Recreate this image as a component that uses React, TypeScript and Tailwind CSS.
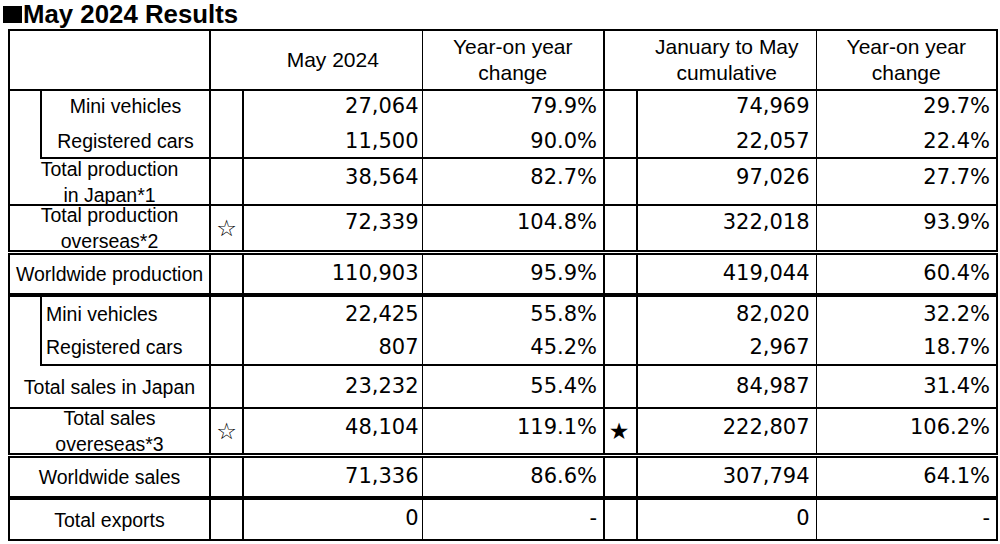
import React from "react"

const lbl = "font-['Liberation_Sans',Arial,sans-serif] text-[19.5px] leading-[22px] text-black"
const num = "font-['DejaVu_Sans',sans-serif] text-[21px] leading-[22px] text-black text-right align-middle"
const star = "font-['DejaVu_Sans',sans-serif] text-[23px] leading-[22px] text-black text-center align-middle"

const B_NONE = "border-b-0"
const B_SOLID = "border-b-2"
const B_DOUBLE = "border-b-[5px] border-double"
const B_THICK = "border-b-4"

function Values({ v, s1 = "", s2 = "", b, pad = "" }: { v: string[]; s1?: string; s2?: string; b: string; pad?: string }) {
  return (
    <>
      <td className={`border-x-2 border-black ${star} ${b}`}>{s1}</td>
      <td className={`border-l-2 border-r border-black pr-[3px] ${num} ${b} ${pad}`}>{v[0]}</td>
      <td className={`border-l border-r-2 border-black pr-[6px] ${num} ${b} ${pad}`}>{v[1]}</td>
      <td className={`border-x-2 border-black pr-[3px] ${star} ${b}`}>{s2}</td>
      <td className={`border-l-2 border-r border-black pr-[6px] ${num} ${b} ${pad}`}>{v[2]}</td>
      <td className={`border-l border-r-2 border-black pr-[6px] ${num} ${b} ${pad}`}>{v[3]}</td>
    </>
  )
}

function TwoLine({ a, c }: { a: string; c: string }) {
  return (
    <div className="h-[42px] flex flex-col justify-center items-center leading-[26px]">
      <span>{a}</span>
      <span>{c}</span>
    </div>
  )
}

export default function App() {
  return (
    <div className="bg-white w-[1000px] h-[544px] overflow-hidden">
      <div className="h-[29px] leading-[28px] font-['Liberation_Sans',Arial,sans-serif] font-bold text-[25.8px] text-black whitespace-nowrap">
        <span className="inline-block w-[19px] h-[17px] bg-black ml-[3px] mr-[1px]"></span>
        May 2024 Results
      </div>

      <table className="ml-[8px] border-collapse table-fixed w-[988px]">
        <colgroup>
          <col className="w-[32px]" />
          <col className="w-[169px]" />
          <col className="w-[33px]" />
          <col className="w-[179px]" />
          <col className="w-[182px]" />
          <col className="w-[33px]" />
          <col className="w-[179px]" />
          <col className="w-[181px]" />
        </colgroup>
        <tbody>
          <tr className="h-[60px]">
            <td colSpan={2} className="border-t-2 border-b-2 border-x-2 border-black"></td>
            <td colSpan={2} className={`border-t-2 border-b-2 border-l-2 border-r border-black text-center pl-[33px] font-['Liberation_Sans',Arial,sans-serif] text-[21px]`}>
              May 2024
            </td>
            <td className="border-t-2 border-b-2 border-l border-r-2 border-black text-center font-['Liberation_Sans',Arial,sans-serif] text-[21px] leading-[26px]">
              Year-on year<br />change
            </td>
            <td colSpan={2} className="border-t-2 border-b-2 border-l-2 border-r border-black text-center pl-[33px] font-['Liberation_Sans',Arial,sans-serif] text-[21px] leading-[26px]">
              January to May<br />cumulative
            </td>
            <td className="border-t-2 border-b-2 border-l border-r-2 border-black text-center font-['Liberation_Sans',Arial,sans-serif] text-[21px] leading-[26px]">
              Year-on year<br />change
            </td>
          </tr>

          {/* production */}
          <tr className="h-[34px]">
            <td rowSpan={2} className="border-x-2 border-black"></td>
            <td className={`border-x-2 border-black text-center pb-[3px] ${lbl}`}>Mini vehicles</td>
            <Values v={["27,064", "79.9%", "74,969", "29.7%"]} b={B_NONE} pad="pb-[3px]" />
          </tr>
          <tr className="h-[34px]">
            <td className={`border-x-2 border-b-2 border-black text-center ${lbl}`}>Registered cars</td>
            <Values v={["11,500", "90.0%", "22,057", "22.4%"]} b={B_SOLID} />
          </tr>
          <tr className="h-[47px]">
            <td colSpan={2} className={`border-x-2 border-b-2 border-black text-center ${lbl}`}>
              <TwoLine a="Total production" c="in Japan*1" />
            </td>
            <Values v={["38,564", "82.7%", "97,026", "27.7%"]} b={B_SOLID} pad="pb-[10px]" />
          </tr>
          <tr className="h-[47px]">
            <td colSpan={2} className={`border-x-2 border-black text-center ${lbl} ${B_DOUBLE}`}>
              <TwoLine a="Total production" c="overseas*2" />
            </td>
            <Values v={["72,339", "104.8%", "322,018", "93.9%"]} s1="☆" b={B_DOUBLE} pad="pb-[12px]" />
          </tr>
          <tr className="h-[43px]">
            <td colSpan={2} className={`border-x-2 border-black text-center ${lbl} ${B_THICK}`}>Worldwide production</td>
            <Values v={["110,903", "95.9%", "419,044", "60.4%"]} b={B_THICK} pad="pb-[2px]" />
          </tr>

          {/* sales */}
          <tr className="h-[35px]">
            <td rowSpan={2} className="border-x-2 border-black"></td>
            <td className={`border-x-2 border-black text-left pl-[4px] ${lbl}`}>Mini vehicles</td>
            <Values v={["22,425", "55.8%", "82,020", "32.2%"]} b={B_NONE} />
          </tr>
          <tr className="h-[35px]">
            <td className={`border-x-2 border-b-2 border-black text-left pl-[4px] ${lbl}`}>Registered cars</td>
            <Values v={["807", "45.2%", "2,967", "18.7%"]} b={B_SOLID} />
          </tr>
          <tr className="h-[43px]">
            <td colSpan={2} className={`border-x-2 border-b-2 border-black text-center ${lbl}`}>Total sales in Japan</td>
            <Values v={["23,232", "55.4%", "84,987", "31.4%"]} b={B_SOLID} pad="pb-[2px]" />
          </tr>
          <tr className="h-[47px]">
            <td colSpan={2} className={`border-x-2 border-black text-center ${lbl} ${B_DOUBLE}`}>
              <TwoLine a="Total sales" c="overeseas*3" />
            </td>
            <Values v={["48,104", "119.1%", "222,807", "106.2%"]} s1="☆" s2="★" b={B_DOUBLE} pad="pb-[8px]" />
          </tr>
          <tr className="h-[43px]">
            <td colSpan={2} className={`border-x-2 border-black text-center ${lbl} ${B_THICK}`}>Worldwide sales</td>
            <Values v={["71,336", "86.6%", "307,794", "64.1%"]} b={B_THICK} pad="pb-[2px]" />
          </tr>
          <tr className="h-[42px]">
            <td colSpan={2} className={`border-x-2 border-b-2 border-black text-center ${lbl}`}>Total exports</td>
            <Values v={["0", "-", "0", "-"]} b={B_SOLID} pad="pb-[4px]" />
          </tr>
        </tbody>
      </table>
    </div>
  )
}
